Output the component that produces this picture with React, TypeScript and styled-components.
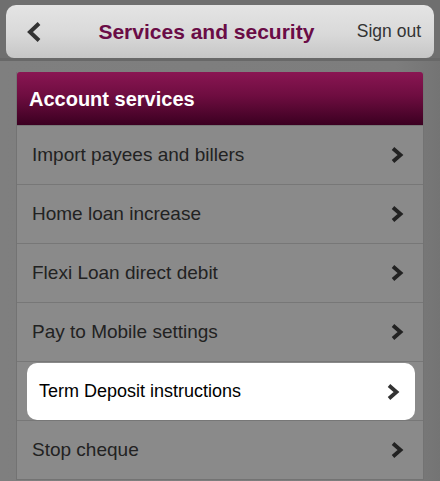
import React from "react";
import styled, { createGlobalStyle } from "styled-components";

const GlobalStyle = createGlobalStyle`
  html, body {
    margin: 0;
    padding: 0;
    background: #7d7d7d;
    font-family: "Liberation Sans", Arial, sans-serif;
  }
`;

const Page = styled.div`
  width: 440px;
  height: 481px;
  overflow: hidden;
  background: linear-gradient(to right, #7f7f7f 0%, #7d7d7d 90%, #747474 100%);
`;

const TopArea = styled.div`
  background: #6f6f6f;
  padding: 5px 6px 0;
  border-bottom: 3px solid #686868;
`;

const Toolbar = styled.div`
  height: 53px;
  border-radius: 10px 10px 8px 8px;
  background: linear-gradient(to bottom, #e4e4e4 0%, #d9d9d9 55%, #c6c6c6 100%);
  display: flex;
  align-items: center;
  padding: 0 13px 0 20px;
`;

const BackButton = styled.div`
  width: 20px;
  display: flex;
  align-items: center;
`;

const Title = styled.h1`
  flex: 1;
  margin: 0;
  text-align: center;
  font-size: 21px;
  font-weight: bold;
  color: #6a0c46;
  padding-left: 10px;
`;

const SignOut = styled.div`
  font-size: 17.5px;
  color: #333;
`;

const Panel = styled.div`
  margin: 11px 16px 0;
  border: 1px solid #737373;
  border-top: none;
`;

const PanelHeader = styled.div`
  height: 53px;
  border-radius: 3px 3px 0 0;
  background: linear-gradient(to bottom, #8a1653 0%, #6e0d40 45%, #3b0021 100%);
  display: flex;
  align-items: center;
  padding: 1px 0 0 12px;
  box-sizing: border-box;
  color: #fff;
  font-size: 20px;
  font-weight: bold;
`;

const Row = styled.div<{ $active?: boolean }>`
  height: 59px;
  box-sizing: border-box;
  border-top: 1px solid #777;
  background: #8a8a8a;
  display: flex;
  align-items: center;
  padding: ${p => (p.$active ? "1px 8px 0 10px" : "0 19px 0 15px")};
`;

const Card = styled.div`
  flex: 1;
  height: 100%;
  background: #fff;
  border-radius: 10px;
  display: flex;
  align-items: center;
  padding: 0 15px 0 12px;
`;

const Label = styled.span<{ $active?: boolean }>`
  flex: 1;
  font-size: ${p => (p.$active ? "18px" : "19px")};
  color: ${p => (p.$active ? "#000" : "#222")};
`;

const Chevron = ({ color = "#222" }: { color?: string }) => (
  <svg width="14" height="18" viewBox="0 0 14 18">
    <path d="M3 2.5 L10.5 9 L3 15.5" fill="none" stroke={color} strokeWidth="3.8" />
  </svg>
);

const items = [
  "Import payees and billers",
  "Home loan increase",
  "Flexi Loan direct debit",
  "Pay to Mobile settings",
  "Term Deposit instructions",
  "Stop cheque",
];

export default function App() {
  return (
    <Page>
      <GlobalStyle />
      <TopArea>
        <Toolbar>
          <BackButton>
            <svg width="16" height="22" viewBox="0 0 16 22">
              <path d="M13 2.5 L4 11 L13 19.5" fill="none" stroke="#333" strokeWidth="4" />
            </svg>
          </BackButton>
          <Title>Services and security</Title>
          <SignOut>Sign out</SignOut>
        </Toolbar>
      </TopArea>
      <Panel>
        <PanelHeader>Account services</PanelHeader>
        {items.map((item, i) =>
          i === 4 ? (
            <Row key={item} $active>
              <Card>
                <Label $active>{item}</Label>
                <Chevron color="#333" />
              </Card>
            </Row>
          ) : (
            <Row key={item}>
              <Label>{item}</Label>
              <Chevron />
            </Row>
          )
        )}
      </Panel>
    </Page>
  );
}
